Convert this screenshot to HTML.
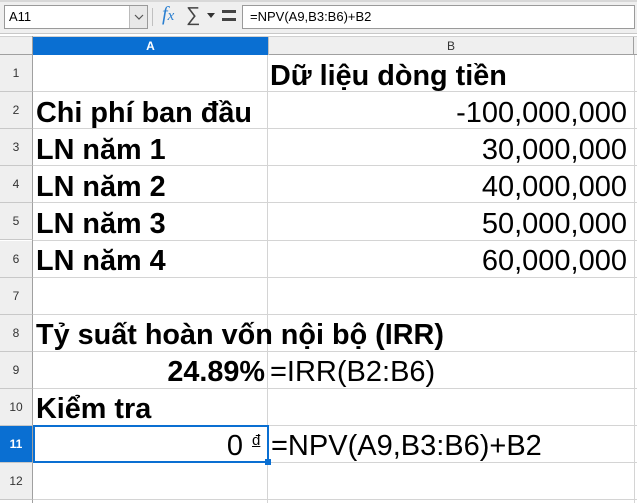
<!DOCTYPE html>
<html><head><style>
*{margin:0;padding:0;box-sizing:border-box}
body{width:637px;height:503px;background:#fff;font-family:"Liberation Sans",Arial,sans-serif;position:relative;overflow:hidden}
.a{position:absolute}
.rh{position:absolute;left:0;width:33px;background:#efefef;border-right:1px solid #a0a0a0;border-bottom:1px solid #c8c8c8;font-size:12px;color:#333;text-align:center}
.hl{position:absolute;left:33px;width:604px;height:1px;background:#d4d4d4}
.t{position:absolute;font-size:29px;white-space:nowrap;color:#000;line-height:37px;margin-top:2px}
.b{font-weight:bold;font-size:28.8px}
</style></head><body>
<div class="a" style="left:0;top:0;width:637px;height:34px;background:#efefef;border-bottom:1px solid #c8c8c8"></div>
<div class="a" style="left:0;top:0;width:637px;height:2px;background:#d8d8d8"></div>
<div class="a" style="left:4px;top:5px;width:144px;height:24px;background:#fff;border:1px solid #9a9a9a;font-size:13px;line-height:22px;padding-left:4px">A11</div>
<div class="a" style="left:129px;top:6px;width:18px;height:22px;background:#e8e8e8;border-left:1px solid #bbb"><svg width="18" height="22"><path d="M5 9l4 4 4-4" fill="none" stroke="#555" stroke-width="1.2"/></svg></div>
<div class="a" style="left:152px;top:8px;width:1px;height:18px;background:#c0c0c0"></div>
<div class="a" style="left:162px;top:3px;font-family:'Liberation Serif',serif;font-style:italic;font-size:20px;color:#2a7fd0">f<span style="font-size:15px">x</span></div>
<div class="a" style="left:186px;top:4px;font-size:20px;color:#444">∑</div>
<div class="a" style="left:207px;top:13px;width:0;height:0;border-left:4px solid transparent;border-right:4px solid transparent;border-top:5px solid #333"></div>
<div class="a" style="left:222px;top:10px;width:14px;height:3px;background:#444"></div>
<div class="a" style="left:222px;top:18px;width:14px;height:3px;background:#444"></div>
<div class="a" style="left:242px;top:5px;width:393px;height:24px;background:#fff;border:1px solid #9a9a9a;font-size:13px;line-height:22px;padding-left:7px">=NPV(A9,B3:B6)+B2</div>
<div class="a" style="left:0;top:36px;width:637px;height:19px;background:#efefef;border-bottom:1px solid #a0a0a0;border-top:1px solid #d0d0d0"></div>
<div class="a" style="left:33px;top:37px;width:235px;height:18px;background:#0a6fd2;color:#fff;font-size:12px;font-weight:bold;text-align:center;line-height:18px">A</div>
<div class="a" style="left:268px;top:37px;width:366px;height:18px;color:#333;font-size:12px;text-align:center;line-height:18px;border-left:1px solid #c0c0c0;border-right:1px solid #a0a0a0">B</div>
<div class="a" style="left:32px;top:36px;width:1px;height:467px;background:#a0a0a0"></div>
<div class="a" style="left:267px;top:55px;width:1px;height:448px;background:#d4d4d4"></div>
<div class="a" style="left:634px;top:55px;width:1px;height:448px;background:#d4d4d4"></div>
<div id="rows"></div>
<script>
var h='';for(var i=0;i<12;i++){var y=55+i*37.1;h+='<div class="rh" style="top:'+y+'px;height:37.1px;line-height:37px;'+(i==10?'background:#0a6fd2;color:#fff;font-weight:bold;':'')+'">'+(i+1)+'</div><div class="hl" style="top:'+(y+36.1)+'px"></div>';}
document.getElementById('rows').innerHTML=h;
</script>
<div class="t b" style="left:270px;top:56px">Dữ liệu dòng tiền</div>
<div class="t b" style="left:36px;top:93px">Chi phí ban đầu</div>
<div class="t" style="right:10px;top:93px">-100,000,000</div>
<div class="t b" style="left:36px;top:130px">LN năm 1</div>
<div class="t" style="right:10px;top:130px">30,000,000</div>
<div class="t b" style="left:36px;top:167px">LN năm 2</div>
<div class="t" style="right:10px;top:167px">40,000,000</div>
<div class="t b" style="left:36px;top:204px">LN năm 3</div>
<div class="t" style="right:10px;top:204px">50,000,000</div>
<div class="t b" style="left:36px;top:241px">LN năm 4</div>
<div class="t" style="right:10px;top:241px">60,000,000</div>
<div class="t b" style="left:36px;top:315px">Tỷ suất hoàn vốn nội bộ (IRR)</div>
<div class="t b" style="right:372px;top:352px">24.89%</div>
<div class="t" style="left:270px;top:352px">=IRR(B2:B6)</div>
<div class="t b" style="left:36px;top:389px">Kiểm tra</div>
<div class="a" style="left:33px;top:425px;width:236px;height:38px;border:2px solid #0a6fd2"></div>
<div class="a" style="left:265px;top:459px;width:6px;height:6px;background:#0a6fd2"></div>
<div class="t" style="right:394px;top:426px">0</div>
<div class="a" style="left:252px;top:432px;font-size:15px;text-decoration:underline">đ</div>
<div class="t" style="left:271px;top:426px">=NPV(A9,B3:B6)+B2</div>
</body></html>
